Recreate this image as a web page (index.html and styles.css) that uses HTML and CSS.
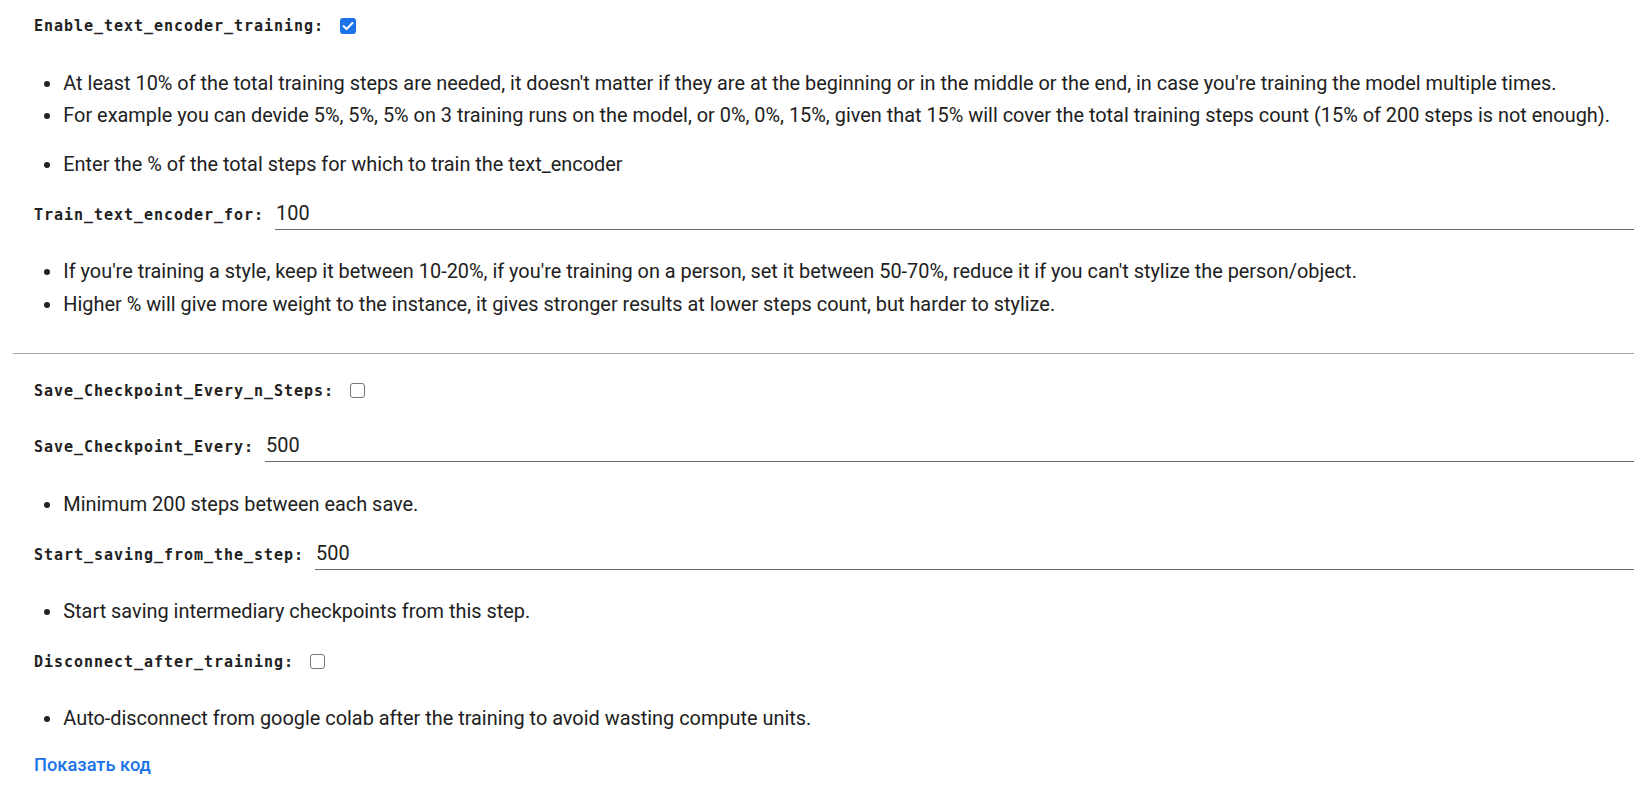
FILE: index.html
```html
<!DOCTYPE html>
<html lang="en">
<head>
<meta charset="utf-8">
<title>Form</title>
<link rel="stylesheet" href="styles.css">
</head>
<body>
<div class="cell">
  <div class="field cb-row mt-top">
    <span class="label">Enable_text_encoder_training:</span>
    <span class="cb checked"><svg viewBox="0 0 16 16" width="16" height="16"><path d="M3.6 8.2 L6.6 11.1 L12.4 5" fill="none" stroke="#fff" stroke-width="2.1" stroke-linecap="round" stroke-linejoin="round"/></svg></span>
  </div>
  <ul class="notes mt-30">
    <li>At least 10% of the total training steps are needed, it doesn't matter if they are at the beginning or in the middle or the end, in case you're training the model multiple times.</li>
    <li>For example you can devide 5%, 5%, 5% on 3 training runs on the model, or 0%, 0%, 15%, given that 15% will cover the total training steps count (15% of 200 steps is not enough).</li>
  </ul>
  <ul class="notes mt-16">
    <li>Enter the % of the total steps for which to train the text_encoder</li>
  </ul>
  <div class="field in-row mt-16">
    <span class="label">Train_text_encoder_for:</span>
    <input class="text-in" type="text" value="100">
  </div>
  <ul class="notes mt-26">
    <li>If you're training a style, keep it between 10-20%, if you're training on a person, set it between 50-70%, reduce it if you can't stylize the person/object.</li>
    <li>Higher % will give more weight to the instance, it gives stronger results at lower steps count, but harder to stylize.</li>
  </ul>
  <hr class="sep">
  <div class="field cb-row mt-25">
    <span class="label">Save_Checkpoint_Every_n_Steps:</span>
    <span class="cb"></span>
  </div>
  <div class="field in-row mt-26">
    <span class="label">Save_Checkpoint_Every:</span>
    <input class="text-in" type="text" value="500">
  </div>
  <ul class="notes mt-27">
    <li>Minimum 200 steps between each save.</li>
  </ul>
  <div class="field in-row mt-15">
    <span class="label">Start_saving_from_the_step:</span>
    <input class="text-in" type="text" value="500">
  </div>
  <ul class="notes mt-26">
    <li>Start saving intermediary checkpoints from this step.</li>
  </ul>
  <div class="field cb-row mt-21">
    <span class="label">Disconnect_after_training:</span>
    <span class="cb"></span>
  </div>
  <ul class="notes mt-29">
    <li>Auto-disconnect from google colab after the training to avoid wasting compute units.</li>
  </ul>
  <a class="show-code" href="#">Показать код</a>
</div>
</body>
</html>
```

FILE: styles.css
```css
html, body {
  margin: 0;
  padding: 0;
  background: #ffffff;
}

body {
  font-family: Roboto, "Noto Sans", sans-serif;
  color: #212121;
  overflow: hidden;
}

.cell {
  padding: 14px 0 0 13px;
}

.field {
  display: flex;
  margin-left: 21px;
}

.cb-row {
  align-items: center;
  height: 24px;
}

.in-row {
  align-items: baseline;
}

.label {
  font-family: "DejaVu Sans Mono", "Liberation Mono", monospace;
  font-weight: bold;
  font-size: 15px;
  letter-spacing: 0.97px;
  line-height: 24px;
  color: #212121;
  white-space: nowrap;
}

.cb {
  box-sizing: border-box;
  width: 15px;
  height: 15px;
  margin-left: 16px;
  border: 1px solid #767676;
  border-radius: 3px;
  background: #fff;
  display: inline-flex;
  align-items: center;
  justify-content: center;
}

.cb.checked {
  width: 16px;
  height: 16px;
  border: none;
  background: #1a73e8;
}

.cb svg {
  display: block;
}

.text-in {
  flex: 1;
  min-width: 0;
  box-sizing: content-box;
  height: 32px;
  margin: 0 0 0 11px;
  padding: 0 0 0 1px;
  border: none;
  border-bottom: 1px solid #6b6b6b;
  outline: none;
  font-family: Roboto, "Noto Sans", sans-serif;
  font-size: 19.9px;
  color: #212121;
  background: transparent;
}

.notes {
  list-style: disc;
  margin-right: 0;
  margin-bottom: 0;
  margin-left: 21px;
  padding-left: 29.3px;
  font-size: 19.9px;
  line-height: 32.5px;
}

.notes li {
  padding-left: 0;
}

.sep {
  margin: 31.6px 0 0 0;
  border: none;
  border-top: 1px solid #a6a6a6;
  height: 0;
}

.show-code {
  display: inline-block;
  margin: 17px 0 0 21px;
  font-size: 18.3px;
  line-height: 24px;
  font-weight: 500;
  color: #1a73e8;
  text-decoration: none;
}

.mt-top { margin-top: 0; }
.mt-15 { margin-top: 15.4px; }
.mt-16 { margin-top: 16px; }
.mt-21 { margin-top: 21px; }
.mt-25 { margin-top: 25px; }
.mt-26 { margin-top: 26.4px; }
.mt-27 { margin-top: 26.8px; }
.mt-29 { margin-top: 29.2px; }
.mt-30 { margin-top: 29.5px; }
```
